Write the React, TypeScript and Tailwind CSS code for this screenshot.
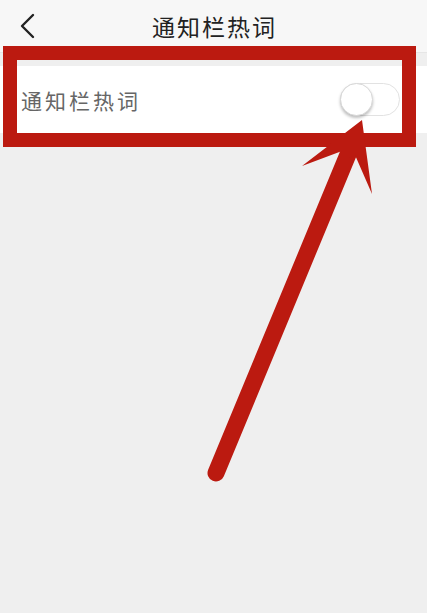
import React from "react";

export default function App() {
  const font = { fontFamily: '"Noto Sans CJK SC", "Noto Sans", sans-serif' };
  return (
    <div className="relative w-[427px] h-[613px] overflow-hidden bg-[#efefef]" style={font}>
      <div className="h-[53px] bg-[#f7f7f7] border-b border-[#e6e6e6] flex items-center justify-center relative">
        <svg className="absolute left-[18px] top-[13px]" width="20" height="26" viewBox="0 0 20 26">
          <path d="M15 2 L4 13 L15 24" fill="none" stroke="#222" strokeWidth="2.4" strokeLinecap="round" strokeLinejoin="round" />
        </svg>
        <span className="text-[23px] text-[#222] tracking-[2px] ml-[2px]">通知栏热词</span>
      </div>
      <div className="mt-[13px] h-[67px] bg-white flex items-center justify-between pl-[21px] pr-[27px]">
        <span className="text-[21px] text-[#666] tracking-[3px] mt-[2px]">通知栏热词</span>
        <div className="relative w-[60px] h-[33px] rounded-full bg-white border border-[#e2e2e2]">
          <div className="absolute left-[-1px] top-[-1px] w-[33px] h-[33px] rounded-full bg-white border border-[#d8d8d8] shadow-[0_2px_3px_rgba(0,0,0,0.25)]" />
        </div>
      </div>
      <div className="absolute left-[3px] top-[46px] w-[413px] h-[101px] border-[14px] border-[#bb1a10]" />
      <svg className="absolute left-0 top-0" width="427" height="613" viewBox="0 0 427 613">
        <line x1="349" y1="152" x2="216" y2="473" stroke="#bb1a10" strokeWidth="17" strokeLinecap="round" />
        <polygon points="362,120 372,194 355,155 349,158 342,151 302,166" fill="#bb1a10" />
      </svg>
    </div>
  );
}
